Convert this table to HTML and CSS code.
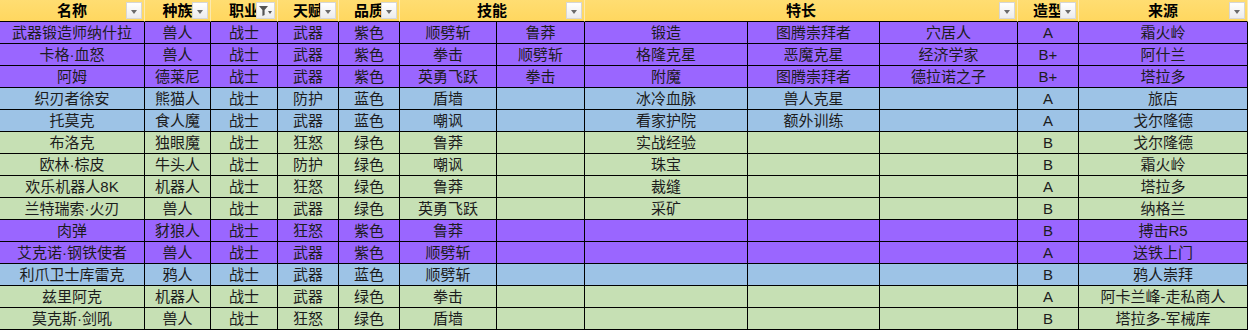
FILE: index.html
```html
<!DOCTYPE html>
<html lang="zh-CN">
<head>
<meta charset="utf-8">
<title>表格</title>
<link rel="stylesheet" href="styles.css">
</head>
<body>
<div class="sheet">
  <div class="row head">
    <div class="cell">名称<span class="dd"><i class="tri"></i></span></div>
    <div class="cell">种族<span class="dd"><i class="tri"></i></span></div>
    <div class="cell">职业<span class="dd filter"><svg width="15" height="13" viewBox="0 0 15 13"><path d="M1 2h9L6.6 6v5L4.4 12V6z" fill="#555"/><path d="M10 7h4l-2 3z" fill="#555"/></svg></span></div>
    <div class="cell">天赋<span class="dd"><i class="tri"></i></span></div>
    <div class="cell">品质<span class="dd"><i class="tri"></i></span></div>
    <div class="cell span2">技能<span class="dd"><i class="tri"></i></span></div>
    <div class="cell span3">特长<span class="dd"><i class="tri"></i></span></div>
    <div class="cell">造型<span class="dd"><i class="tri"></i></span></div>
    <div class="cell">来源<span class="dd"><i class="tri"></i></span></div>
  </div>

  <div class="row purple"><div class="cell">武器锻造师纳什拉</div><div class="cell">兽人</div><div class="cell">战士</div><div class="cell">武器</div><div class="cell">紫色</div><div class="cell">顺劈斩</div><div class="cell">鲁莽</div><div class="cell">锻造</div><div class="cell">图腾崇拜者</div><div class="cell">穴居人</div><div class="cell">A</div><div class="cell">霜火岭</div></div>
  <div class="row purple"><div class="cell">卡格·血怒</div><div class="cell">兽人</div><div class="cell">战士</div><div class="cell">武器</div><div class="cell">紫色</div><div class="cell">拳击</div><div class="cell">顺劈斩</div><div class="cell">格隆克星</div><div class="cell">恶魔克星</div><div class="cell">经济学家</div><div class="cell">B+</div><div class="cell">阿什兰</div></div>
  <div class="row purple"><div class="cell">阿姆</div><div class="cell">德莱尼</div><div class="cell">战士</div><div class="cell">武器</div><div class="cell">紫色</div><div class="cell">英勇飞跃</div><div class="cell">拳击</div><div class="cell">附魔</div><div class="cell">图腾崇拜者</div><div class="cell">德拉诺之子</div><div class="cell">B+</div><div class="cell">塔拉多</div></div>
  <div class="row blue"><div class="cell">织刃者徐安</div><div class="cell">熊猫人</div><div class="cell">战士</div><div class="cell">防护</div><div class="cell">蓝色</div><div class="cell">盾墙</div><div class="cell"></div><div class="cell">冰冷血脉</div><div class="cell">兽人克星</div><div class="cell"></div><div class="cell">A</div><div class="cell">旅店</div></div>
  <div class="row blue"><div class="cell">托莫克</div><div class="cell">食人魔</div><div class="cell">战士</div><div class="cell">武器</div><div class="cell">蓝色</div><div class="cell">嘲讽</div><div class="cell"></div><div class="cell">看家护院</div><div class="cell">额外训练</div><div class="cell"></div><div class="cell">A</div><div class="cell">戈尔隆德</div></div>
  <div class="row green"><div class="cell">布洛克</div><div class="cell">独眼魔</div><div class="cell">战士</div><div class="cell">狂怒</div><div class="cell">绿色</div><div class="cell">鲁莽</div><div class="cell"></div><div class="cell">实战经验</div><div class="cell"></div><div class="cell"></div><div class="cell">B</div><div class="cell">戈尔隆德</div></div>
  <div class="row green"><div class="cell">欧林·棕皮</div><div class="cell">牛头人</div><div class="cell">战士</div><div class="cell">防护</div><div class="cell">绿色</div><div class="cell">嘲讽</div><div class="cell"></div><div class="cell">珠宝</div><div class="cell"></div><div class="cell"></div><div class="cell">B</div><div class="cell">霜火岭</div></div>
  <div class="row green"><div class="cell">欢乐机器人8K</div><div class="cell">机器人</div><div class="cell">战士</div><div class="cell">狂怒</div><div class="cell">绿色</div><div class="cell">鲁莽</div><div class="cell"></div><div class="cell">裁缝</div><div class="cell"></div><div class="cell"></div><div class="cell">A</div><div class="cell">塔拉多</div></div>
  <div class="row green"><div class="cell">兰特瑞索·火刃</div><div class="cell">兽人</div><div class="cell">战士</div><div class="cell">武器</div><div class="cell">绿色</div><div class="cell">英勇飞跃</div><div class="cell"></div><div class="cell">采矿</div><div class="cell"></div><div class="cell"></div><div class="cell">B</div><div class="cell">纳格兰</div></div>
  <div class="row purple"><div class="cell">肉弹</div><div class="cell">豺狼人</div><div class="cell">战士</div><div class="cell">狂怒</div><div class="cell">紫色</div><div class="cell">鲁莽</div><div class="cell"></div><div class="cell"></div><div class="cell"></div><div class="cell"></div><div class="cell">B</div><div class="cell">搏击R5</div></div>
  <div class="row purple"><div class="cell">艾克诺·钢铁使者</div><div class="cell">兽人</div><div class="cell">战士</div><div class="cell">武器</div><div class="cell">紫色</div><div class="cell">顺劈斩</div><div class="cell"></div><div class="cell"></div><div class="cell"></div><div class="cell"></div><div class="cell">A</div><div class="cell">送铁上门</div></div>
  <div class="row blue"><div class="cell">利爪卫士库雷克</div><div class="cell">鸦人</div><div class="cell">战士</div><div class="cell">武器</div><div class="cell">蓝色</div><div class="cell">顺劈斩</div><div class="cell"></div><div class="cell"></div><div class="cell"></div><div class="cell"></div><div class="cell">B</div><div class="cell">鸦人崇拜</div></div>
  <div class="row green"><div class="cell">兹里阿克</div><div class="cell">机器人</div><div class="cell">战士</div><div class="cell">武器</div><div class="cell">绿色</div><div class="cell">拳击</div><div class="cell"></div><div class="cell"></div><div class="cell"></div><div class="cell"></div><div class="cell">A</div><div class="cell">阿卡兰峰-走私商人</div></div>
  <div class="row green"><div class="cell">莫克斯·剑吼</div><div class="cell">兽人</div><div class="cell">战士</div><div class="cell">狂怒</div><div class="cell">绿色</div><div class="cell">盾墙</div><div class="cell"></div><div class="cell"></div><div class="cell"></div><div class="cell"></div><div class="cell">B</div><div class="cell">塔拉多-军械库</div></div>
</div>
</body>
</html>
```

FILE: styles.css
```css
html, body {
  margin: 0;
  padding: 0;
  background: #ffffff;
}

body {
  font-family: "Liberation Sans", "Noto Sans CJK SC", "Microsoft YaHei", sans-serif;
  font-size: 15px;
  color: #1c1c1c;
}

.sheet {
  width: 1248px;
}

.row {
  display: grid;
  grid-template-columns: 145px 66px 67px 61px 61px 97px 88px 163px 132px 138px 61px 169px;
  height: 22px;
}

.cell {
  box-sizing: border-box;
  height: 22px;
  border-right: 1px solid #000;
  border-bottom: 1px solid #000;
  text-align: center;
  line-height: 21px;
  white-space: nowrap;
  overflow: hidden;
}

.purple .cell { background: #9a66ff; }
.blue .cell { background: #9dc3e6; }
.green .cell { background: #c6e0b4; }

.head .cell {
  position: relative;
  background: linear-gradient(#ffdd72, #ffd75f);
  border-right: 1px solid #fbe9b0;
  font-weight: bold;
  color: #000;
}

.head .span2 { grid-column: span 2; }
.head .span3 { grid-column: span 3; }

.dd {
  position: absolute;
  top: 2px;
  right: 2px;
  width: 16px;
  height: 17px;
  box-sizing: border-box;
  background: linear-gradient(#ffffff, #ececec);
  border: 1px solid #d6d6d6;
  display: flex;
  align-items: center;
  justify-content: center;
}

.dd.filter {
  width: 19px;
}

.tri {
  display: block;
  width: 0;
  height: 0;
  border-left: 3.5px solid transparent;
  border-right: 3.5px solid transparent;
  border-top: 4px solid #6a6a6a;
  margin-top: 2px;
}
```
